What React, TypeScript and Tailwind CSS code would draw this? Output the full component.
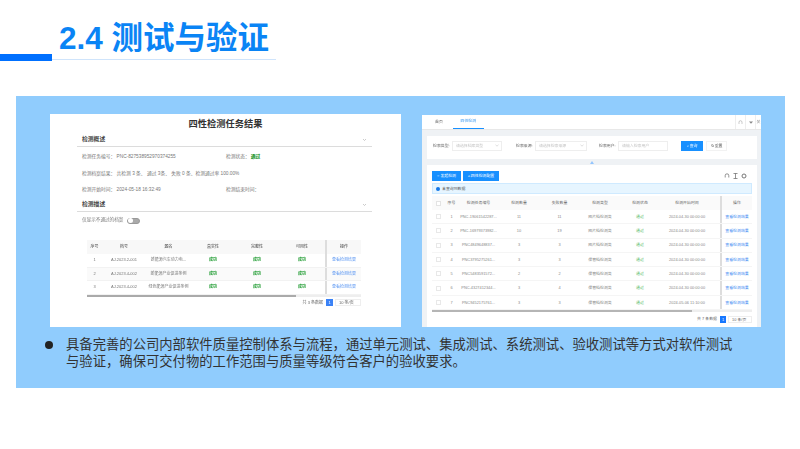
import React from "react";

const CJK = "font-['Liberation_Sans','Noto_Sans_CJK_SC',sans-serif]";

function Section({ title }: { title: string }) {
  return (
    <div className="mx-[27px] w-[295px] h-[14px] pl-[5px] pr-[5px] flex items-center justify-between border-b-[1.5px] border-[#dcdcdc]">
      <span className="text-[5.8px] font-bold text-[#444]">{title}</span>
      <svg width="5" height="4" viewBox="0 0 5 4"><path d="M1 1l1.5 1.5L4 1" fill="none" stroke="#aaa" strokeWidth="0.6" /></svg>
    </div>
  );
}

const leftRows = [
  ["1", "AJ.2023.2-001", "新能源汽车动力电..."],
  ["2", "AJ.2023.4-002", "新能源产业促进条例"],
  ["3", "AJ.2023.4-002", "绿色能源产业促进条例"],
];
const leftCols = "grid grid-cols-[15px_44px_45px_44px_44px_46px_36px]";

function LeftCard() {
  return (
    <div className="w-[351px] h-[213px] bg-white flex flex-col text-[#777]">
      <div className="h-[19px] pt-[3px] text-center text-[9.25px] leading-[15px] font-bold text-[#333]">四性检测任务结果</div>
      <Section title="检测概述" />
      <div className="ml-[32px] h-[16px] mt-[2px] flex items-center text-[4.75px]">
        <span className="w-[144px]">检测任务编号： PNC-827538952970374255</span>
        <span>检测状态：<span className="ml-[1px] font-bold text-[#17912a] bg-[#dff3e0]">通过</span></span>
      </div>
      <div className="ml-[32px] h-[17px] flex items-center text-[4.75px]">检测档案结果： 共检测 3 条、 通过 3条、 失败 0 条、检测通过率 100.00%</div>
      <div className="ml-[32px] h-[16px] flex items-center text-[4.75px]">
        <span className="w-[144px]">检测开始时间： 2024-05-18 16:32:49</span>
        <span>检测结束时间：</span>
      </div>
      <Section title="检测描述" />
      <div className="ml-[32px] mt-[2px] h-[13px] flex items-center text-[4.6px]">
        <span className="w-[45px] whitespace-nowrap">仅显示不通过的档案</span>
        <span className="w-[13px] h-[6px] rounded-full bg-[#aaa] border border-[#999] flex items-center">
          <span className="w-[5px] h-[5px] rounded-full bg-white" />
        </span>
      </div>
      <div className="ml-[37px] w-[274px] mt-[13px] text-[4px] text-center">
        <div className={`${leftCols} h-[14px] items-center bg-[#f8f8f8] text-[#444]`}>
          {["序号", "档号", "题名", "真实性", "完整性", "可用性"].map((h) => <span key={h}>{h}</span>)}
          <span className="h-full flex items-center justify-center border-l-2 border-[#ddd]">操作</span>
        </div>
        {leftRows.map((r, i) => (
          <div key={r[0]} className={`${leftCols} h-[13.5px] items-center border-b border-[#f2f2f2] ${i === 1 ? "bg-[#fafafa]" : ""}`}>
            <span>{r[0]}</span>
            <span>{r[1]}</span>
            <span className="whitespace-nowrap">{r[2]}</span>
            {[0, 1, 2].map((k) => <span key={k} className="font-bold text-[#1c9a2e]">成功</span>)}
            <span className="h-full flex items-center justify-center border-l-2 border-[#ddd] text-[#5a96f2]">查看检测结果</span>
          </div>
        ))}
        <div className="h-[2.5px] bg-[#eee]"><div className="w-[209px] h-full bg-[#aaa]" /></div>
        <div className="mt-[2px] h-[7px] flex items-center justify-end text-[#666]">
          <span>共 3 条数据</span>
          <span className="ml-[3px] w-[7px] h-[7px] leading-[7px] bg-[#3b82f6] text-white">1</span>
          <span className="ml-[2px] w-[26px] h-[7px] leading-[6px] border border-[#eee] text-left pl-[3px]">10 条/页</span>
        </div>
      </div>
    </div>
  );
}

const rightRows = [
  ["1", "PNC-19061542287...", "11", "11", "图片档检测类", "通过", "2024-04-30 00:00:00"],
  ["2", "PNC-16979373982...", "10", "19", "图片档检测类", "通过", "2024-04-30 00:00:00"],
  ["3", "PNC4849648837...", "3", "3", "图片档检测类", "通过", "2024-04-30 00:00:00"],
  ["4", "PNC3795275261...", "3", "3", "保管档检测类", "通过", "2024-04-30 00:00:00"],
  ["5", "PNC5483591572...", "2", "2", "保管档检测类", "通过", "2024-04-30 00:00:00"],
  ["6", "PNC-4327412344...", "3", "4", "保管档检测类", "通过", "2024-04-30 00:00:00"],
  ["7", "PNC9452175761...", "3", "3", "保管档检测类", "通过", "2024-05-06 11:10:00"],
];
const rightCols = "grid grid-cols-[13px_13px_41px_40px_41px_40px_40px_54px_6px_32px]";

function Field({ label, text, w, select }: { label: string; text: string; w: string; select?: boolean }) {
  return (
    <div className="flex items-center gap-[2px]">
      <span className="w-[17px] whitespace-nowrap text-[#666]">{label}</span>
      <span className={`${w} h-[10px] border border-[#eee] pl-[3px] leading-[8px] text-[#c4c4c4] flex items-center justify-between pr-[2px]`}>
        {text}
        {select && <svg width="4" height="3" viewBox="0 0 4 3"><path d="M.5.8l1.5 1.4L3.5.8" fill="none" stroke="#bbb" strokeWidth="0.5" /></svg>}
      </span>
    </div>
  );
}

function RightCard() {
  return (
    <div className="w-[339px] h-[212px] bg-[#eff2f5] flex flex-col text-[3.9px] text-[#888]">
      <div className="h-[15px] bg-white flex items-center text-[#666] border-b border-[#e8e8e8]">
        <span className="ml-[13px]">首页</span>
        <span className="ml-[10px] h-full flex items-center w-[31px] justify-center border-b border-[#1890ff] -mt-[1px] text-[#3a97ee]">四性检测</span>
        <span className="ml-auto flex items-center h-full text-[#888]">
          <span className="h-full w-[10px] flex items-center justify-center border-l border-[#eee]">
            <svg width="5" height="5" viewBox="0 0 5 5"><path d="M1 4V2.2a1.5 1.5 0 013 0V4" fill="none" stroke="#999" strokeWidth="0.5" /></svg>
          </span>
          <span className="h-full w-[10px] flex items-center justify-center border-l border-[#eee]">
            <svg width="4" height="3" viewBox="0 0 4 3"><path d="M0 .5h4L2 2.8z" fill="#888" /></svg>
          </span>
          <span className="h-full w-[6px] flex items-center justify-center border-l border-[#eee] whitespace-nowrap">关</span>
        </span>
      </div>
      <div className="ml-[5px] mr-[4px] mt-[6px] h-[23px] bg-white flex items-center pl-[6px] pb-[4px]">
        <Field label="检索类型:" text="请选择档案类型" w="w-[50px]" select />
        <div className="ml-[14px]"><Field label="检索来源:" text="请选择检索来源" w="w-[52px]" select /></div>
        <div className="ml-[12px]"><Field label="检索用户:" text="请输入检索用户" w="w-[50px]" /></div>
        <span className="ml-[13px] w-[22px] h-[10px] bg-[#1890ff] text-white flex items-center justify-center">⌕ 查询</span>
        <span className="ml-[3px] w-[21px] h-[10px] bg-white text-[#444] flex items-center justify-center border border-[#f2f2f2]">↻ 重置</span>
      </div>
      <div className="h-[6px] flex items-center justify-center">
        <svg width="4" height="3" viewBox="0 0 4 3"><path d="M0 3l2-3 2 3z" fill="#93c5fd" /></svg>
      </div>
      <div className="ml-[5px] mr-[4px] flex-1 bg-white px-[5px] pt-[6px]">
        <div className="flex items-center h-[10px]">
          <span className="w-[29px] h-full bg-[#1890ff] text-white flex items-center justify-center">○ 发起检测</span>
          <span className="ml-[2px] w-[36px] h-full bg-[#1890ff] text-white flex items-center justify-center">▵ 四性检测配置</span>
          <span className="ml-auto mr-[5px] flex gap-[3px] items-center">
            <svg width="6" height="6" viewBox="0 0 6 6"><path d="M1.2 4.5V2.6a1.8 1.8 0 013.6 0v1.9" fill="none" stroke="#666" strokeWidth="0.7" /></svg>
            <svg width="5" height="6" viewBox="0 0 5 6"><path d="M.5.5h4M.5 5.5h4M2.5.5v5" fill="none" stroke="#666" strokeWidth="0.7" /></svg>
            <svg width="6" height="6" viewBox="0 0 6 6"><circle cx="3" cy="3" r="2" fill="none" stroke="#777" strokeWidth="1" /></svg>
          </span>
        </div>
        <div className="mt-[2px] h-[11px] bg-[#e6f5ff] border border-[#cfeaff] flex items-center pl-[3px] gap-[2px] text-[#555]">
          <span className="w-[4px] h-[4px] rounded-full bg-[#1477e8]" />
          <span>未查询到数据</span>
        </div>
        <div className={`${rightCols} mt-[2px] h-[14px] items-center text-center bg-[#fafafa] text-[#666]`}>
          <span className="mx-auto w-[5px] h-[5px] border border-[#e3e3e3] bg-white" />
          <span>序号</span><span>检测任务编号</span><span>检测数量</span><span>失败数量</span><span>检测类型</span><span>检测状态</span><span>检测开始时间</span><span />
          <span className="h-full flex items-center justify-center border-l-2 border-[#ddd]">操作</span>
        </div>
        {rightRows.map((r) => (
          <div key={r[0]} className={`${rightCols} h-[14.3px] items-center text-center border-b border-[#f5f5f5]`}>
            <span className="mx-auto w-[5px] h-[5px] border border-[#e8e8e8]" />
            <span>{r[0]}</span>
            <span className="whitespace-nowrap">{r[1]}</span>
            <span>{r[2]}</span><span>{r[3]}</span><span>{r[4]}</span>
            <span className="text-[#55bb68]">{r[5]}</span>
            <span className="whitespace-nowrap">{r[6]}</span>
            <span />
            <span className="h-full flex items-center justify-center border-l-2 border-[#ddd] text-[#3d8bf2]">查看检测结果</span>
          </div>
        ))}
        <div className="h-[2px] bg-[#eee]"><div className="w-[260px] h-full bg-[#b5b5b5]" /></div>
        <div className="mt-[3px] h-[8px] flex items-center justify-end text-[#666]">
          <span>共 7 条数据</span>
          <span className="ml-[3px] w-[6px] h-[7px] leading-[7px] text-center bg-[#1677ff] text-white">1</span>
          <span className="ml-[2px] w-[24px] h-[7px] leading-[6px] border border-[#eee] pl-[3px]">10 条/页</span>
        </div>
      </div>
    </div>
  );
}

export default function App() {
  return (
    <div className={`w-[800px] h-[449px] bg-white overflow-hidden ${CJK}`}>
      <header className="h-[96px]">
        <h1 className="h-[54px] pl-[59px] pt-[20px] text-[31.5px] leading-[36px] font-bold text-[#0a84f5] whitespace-nowrap">2.4 测试与验证</h1>
        <div className="flex items-center">
          <div className="w-[52px] h-[7px] bg-[#0070ff]" />
          <div className="w-[224px] h-[1px] mt-[3px] bg-[#cfe4fb]" />
        </div>
      </header>
      <main className="ml-[16px] w-[769px] h-[292px] bg-[#90ccfd]">
        <div className="flex pl-[34px] pt-[18px] gap-[21px] items-start blur-[0.5px]">
          <LeftCard />
          <div className="mt-[1px]"><RightCard /></div>
        </div>
        <div className="pl-[29px] pt-[9px] flex items-start">
          <span className="mt-[5px] w-[8px] h-[8px] rounded-full bg-[#222]" />
          <p className="ml-[13px] w-[670px] text-[13.33px] leading-[17px] text-[#333]">
            具备完善的公司内部软件质量控制体系与流程，通过单元测试、集成测试、系统测试、验收测试等方式对软件测试与验证，确保可交付物的工作范围与质量等级符合客户的验收要求。
          </p>
        </div>
      </main>
    </div>
  );
}
